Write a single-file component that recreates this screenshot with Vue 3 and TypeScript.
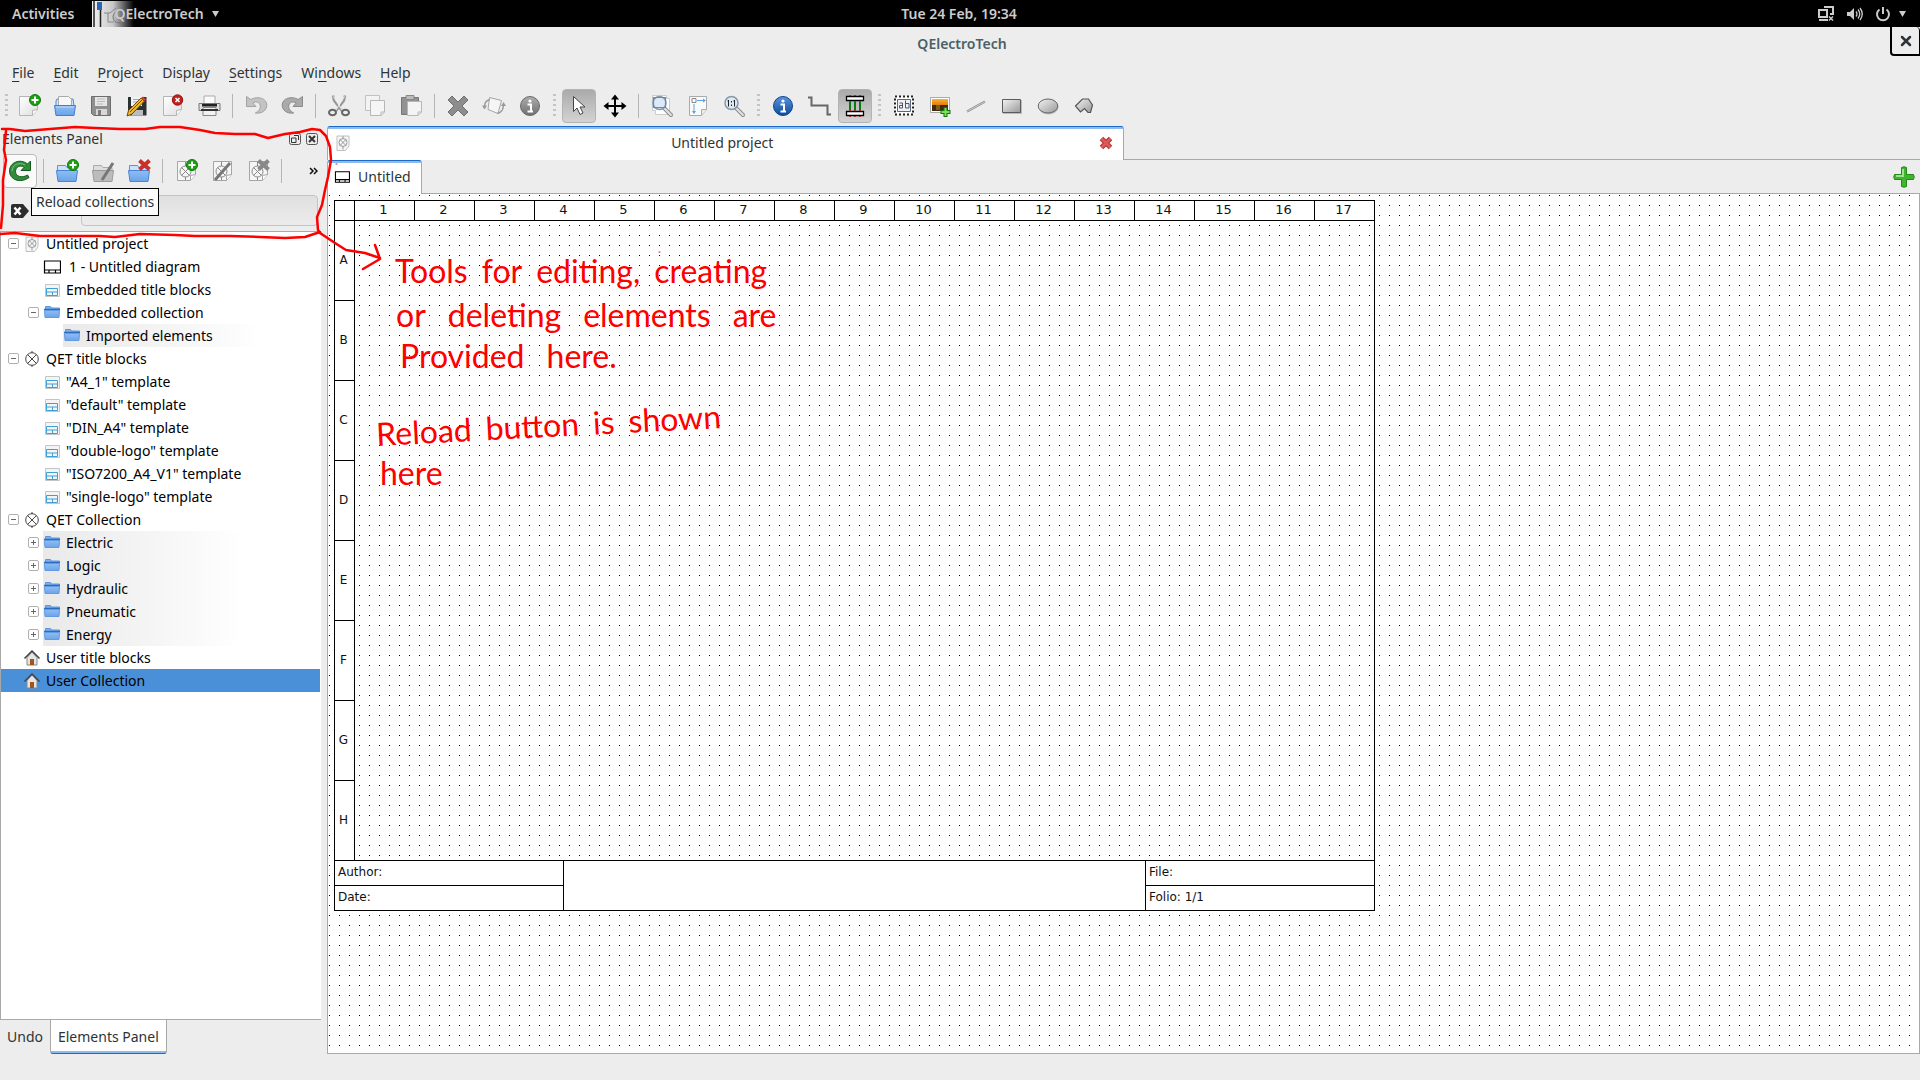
<script setup lang="ts">
import { ref } from 'vue'

interface ToolItem {
  kind: 'button' | 'sep' | 'grip'
  icon?: string
  label?: string
  active?: boolean
}

interface TreeRow {
  text: string
  icon: string
  level: number
  fold?: 'open' | 'closed'
  tinted?: boolean
}

const btn = (icon: string, label: string, active = false): ToolItem => ({ kind: 'button', icon, label, active })
const sep: ToolItem = { kind: 'sep' }
const grip: ToolItem = { kind: 'grip' }

const menus = [
  ['', 'F', 'ile'],
  ['', 'E', 'dit'],
  ['', 'P', 'roject'],
  ['Displ', 'a', 'y'],
  ['', 'S', 'ettings'],
  ['Wi', 'n', 'dows'],
  ['', 'H', 'elp'],
]

const tools: ToolItem[] = [
  grip, btn('new', 'New'), btn('open', 'Open'), btn('save', 'Save'), btn('saveas', 'Save as'), btn('close', 'Close'), btn('print', 'Print'),
  sep, btn('undo', 'Undo'), btn('redo', 'Redo'),
  sep, btn('cut', 'Cut'), btn('copy', 'Copy'), btn('paste', 'Paste'),
  sep, btn('delete', 'Delete'), btn('rotate', 'Rotate'), btn('infogray', 'Properties'),
  grip, btn('pointer', 'Selection mode', true), btn('move', 'View mode'),
  sep, btn('zoomfit', 'Zoom fit'), btn('zoompage', 'Zoom page'), btn('zoomone', 'Zoom reset'),
  grip, btn('info', 'Diagram properties'), btn('wire', 'Conductors'), btn('auto', 'Auto conductors', true),
  grip, btn('text', 'Add text'), btn('image', 'Add image'), btn('line', 'Add line'), btn('rect', 'Add rectangle'), btn('ellipse', 'Add ellipse'), btn('polygon', 'Add polygon'),
]

const panelTools: ToolItem[] = [
  btn('reload', 'Reload collections', true),
  sep, btn('foldernew', 'New category'), btn('folderedit', 'Edit category'), btn('folderdel', 'Delete category'),
  sep, btn('elnew', 'New element'), btn('eledit', 'Edit element'), btn('eldel', 'Delete element'),
  sep,
]

const rows: TreeRow[] = [
  { text: 'Untitled project', icon: 'project', level: 0, fold: 'open' },
  { text: '1 - Untitled diagram', icon: 'diagram', level: 1 },
  { text: 'Embedded title blocks', icon: 'titleblock', level: 1 },
  { text: 'Embedded collection', icon: 'folder', level: 1, fold: 'open' },
  { text: 'Imported elements', icon: 'folder', level: 2, tinted: true },
  { text: 'QET title blocks', icon: 'qet', level: 0, fold: 'open' },
  { text: '"A4_1" template', icon: 'titleblock', level: 1 },
  { text: '"default" template', icon: 'titleblock', level: 1 },
  { text: '"DIN_A4" template', icon: 'titleblock', level: 1 },
  { text: '"double-logo" template', icon: 'titleblock', level: 1 },
  { text: '"ISO7200_A4_V1" template', icon: 'titleblock', level: 1 },
  { text: '"single-logo" template', icon: 'titleblock', level: 1 },
  { text: 'QET Collection', icon: 'qet', level: 0, fold: 'open' },
  { text: 'Electric', icon: 'folder', level: 1, fold: 'closed', tinted: true },
  { text: 'Logic', icon: 'folder', level: 1, fold: 'closed', tinted: true },
  { text: 'Hydraulic', icon: 'folder', level: 1, fold: 'closed', tinted: true },
  { text: 'Pneumatic', icon: 'folder', level: 1, fold: 'closed', tinted: true },
  { text: 'Energy', icon: 'folder', level: 1, fold: 'closed', tinted: true },
  { text: 'User title blocks', icon: 'home', level: 0 },
  { text: 'User Collection', icon: 'home', level: 0 },
]

const selected = ref(19)
const filter = ref('')
const letters = ['A', 'B', 'C', 'D', 'E', 'F', 'G', 'H']

const notes = [
  { id: 'n1', words: ['Tools', 'for', 'editing,', 'creating'] },
  { id: 'n2', words: ['or', 'deleting', 'elements', 'are'] },
  { id: 'n3', words: ['Provided', 'here.'] },
  { id: 'n4', words: ['Reload', 'button', 'is', 'shown'] },
  { id: 'n5', words: ['here'] },
]
</script>

<template>
  <div class="desktop">
    <svg class="defs" aria-hidden="true">
      <defs>
        <linearGradient id="gBlue" x1="0" y1="0" x2="0" y2="1"><stop offset="0" stop-color="#8fbdf2" /><stop offset="1" stop-color="#6ba4ea" /></linearGradient>
        <linearGradient id="gPaper" x1="0" y1="0" x2="1" y2="1"><stop offset="0" stop-color="#fff" /><stop offset="1" stop-color="#dedede" /></linearGradient>
        <linearGradient id="gGray" x1="0" y1="0" x2="1" y2="1"><stop offset="0" stop-color="#f4f4f4" /><stop offset="1" stop-color="#989898" /></linearGradient>
        <linearGradient id="gInfo" x1="0" y1="0" x2="0" y2="1"><stop offset="0" stop-color="#5c93dc" /><stop offset="1" stop-color="#0b4b9c" /></linearGradient>
        <linearGradient id="gInfoGray" x1="0" y1="0" x2="0" y2="1"><stop offset="0" stop-color="#adadad" /><stop offset="1" stop-color="#6f6f6f" /></linearGradient>
        <linearGradient id="gSun" x1="0" y1="0" x2="0" y2="1"><stop offset="0" stop-color="#f9b52c" /><stop offset="1" stop-color="#e37a10" /></linearGradient>
        <linearGradient id="gAppFade"><stop offset="0" stop-color="#f2f2f2" /><stop offset="0.5" stop-color="#c8c8c8" /><stop offset="1" stop-color="#000" /></linearGradient>
      </defs>
      <symbol id="plusbadge" viewBox="0 0 12 12"><circle cx="6" cy="6" r="5.500" fill="#1da114" stroke="#0d7a0b" /><path d="M6 2.500v7M2.500 6h7" stroke="#fff" stroke-width="2" /></symbol>
      <symbol id="sheet" viewBox="0 0 24 24"><path d="M2.500 2.500h18v13l-5 6h-13z" fill="url(#gPaper)" stroke="#b5b5b5" /><path d="M15.500 21.500v-5l5-1" fill="#fff" stroke="#b5b5b5" /></symbol>
      <symbol id="new" viewBox="0 0 24 24"><use href="#sheet" width="24" height="24" /><use href="#plusbadge" x="12" y="0" width="12" height="12" /></symbol>
      <symbol id="close" viewBox="0 0 24 24"><use href="#sheet" width="24" height="24" /><circle cx="16.500" cy="6" r="5.200" fill="#c3201b" stroke="#971410" /><path d="M14.500 4l4 4m0-4l-4 4" stroke="#fff" stroke-width="1.600" /></symbol>
      <symbol id="open" viewBox="0 0 24 24"><path d="M3 7l1-2h16l1 7H3z" fill="#d6e6fa" stroke="#4c86d4" /><path d="M5.500 12V2.500h10l3 3V12z" fill="#f7f7f7" stroke="#aaa" /><path d="M1.500 11.500h21L21 21.500H3z" fill="url(#gBlue)" stroke="#3f7fd3" /><path d="M3 13h18" stroke="#bcd8f8" /></symbol>
      <symbol id="save" viewBox="0 0 24 24"><path d="M2.500 2.500h19v19H5l-2.500-2z" fill="#8f8f8f" stroke="#6d6d6d" /><path d="M6 3h12v9H6z" fill="#e6e6e6" /><path d="M8 5h8M8 7.500h8M8 10h6" stroke="#bdbdbd" /><path d="M7 15h11v6H7z" fill="#d7d7d7" /><path d="M9 16h3v5H9z" fill="#7b7b7b" /></symbol>
      <symbol id="saveas" viewBox="0 0 24 24"><path d="M3 3h18.500v18.500H5L3 20z" fill="#2c3033" /><path d="M6 3h11v9H6z" fill="#eef3fa" /><path d="M8 5.500h7M8 8h7" stroke="#9ab" /><path d="M7 16h11v5.500H7z" fill="#b9bcc0" /><path d="M2 22l1.500-5.500L16 4l3.500 3L7 20z" fill="#f2b72e" stroke="#6c4b0b" /><path d="M5 18L17 6" stroke="#6c4b0b" /><path d="M16 4l2-1.500 3 3L19.500 7z" fill="#d33c2c" /></symbol>
      <symbol id="print" viewBox="0 0 24 24"><path d="M7 10V2h11v8" fill="#fafafa" stroke="#aaa" /><path d="M2 9.500h21v7H2z" fill="#dedede" stroke="#777" /><path d="M5 10h15v2.500H5z" fill="#222" /><path d="M6 13.500h13v8H6z" fill="#f2f2f2" stroke="#888" /><path d="M4 16h17" stroke="#333" stroke-width="2" /></symbol>
      <symbol id="undo" viewBox="0 0 24 24"><path d="M2.500 2.500v10h9.500l-3.200-3.500c3-2 7.500-1 7.500 3.500 0 3-2 5-5 6.500 7 1 11.500-3 11.500-8 0-6.500-9-9.500-16-5.500z" fill="#c3c3c3" stroke="#a3a3a3" /></symbol>
      <symbol id="redo" viewBox="0 0 24 24"><path d="M22.500 2.500v10H13l3.200-3.500c-3-2-7.500-1-7.500 3.500 0 3 2 5 5 6.500-7 1-11.500-3-11.500-8 0-6.500 9-9.500 16-5.500z" fill="#aaa" stroke="#8c8c8c" /></symbol>
      <symbol id="cut" viewBox="0 0 24 24"><path d="M6 1.500l1 5L15 17M18 1.500l-1 5L9 17" fill="none" stroke="#999" stroke-width="2.400" /><path d="M6.500 2.500L15 16M17.500 2.500L9 16" stroke="#efefef" /><ellipse cx="5.500" cy="18.500" rx="3.500" ry="2.800" fill="none" stroke="#666" stroke-width="2" /><ellipse cx="18.500" cy="18.500" rx="3.500" ry="2.800" fill="none" stroke="#666" stroke-width="2" /></symbol>
      <symbol id="copy" viewBox="0 0 24 24"><path d="M2.500 1.500h14v15h-14z" fill="#f3f3f3" stroke="#c1c1c1" /><path d="M7.500 6.500h14V18l-3.500 3.500H7.500z" fill="#f5f5f5" stroke="#b7b7b7" /><path d="M18 21.500V18h3.500" fill="none" stroke="#b7b7b7" /></symbol>
      <symbol id="paste" viewBox="0 0 24 24"><path d="M2.500 3.500h17v17h-17z" fill="#929292" stroke="#777" /><path d="M7 1.500h8v4H7z" fill="#bbb" stroke="#888" /><path d="M8.500 7.500h14V18L19 21.500H8.500z" fill="#f4f4f4" stroke="#b7b7b7" /><path d="M19 21.500V18h3.500" fill="none" stroke="#b7b7b7" /></symbol>
      <symbol id="delete" viewBox="0 0 24 24"><path d="M6 2l6 6 6-6 4 4-6 6 6 6-4 4-6-6-6 6-4-4 6-6-6-6z" fill="#8d8d8d" stroke="#6f6f6f" /></symbol>
      <symbol id="rotate" viewBox="0 0 24 24"><path d="M7.500 3.500l12 3-3.500 13-10-4z" fill="#f5f5f5" stroke="#a5a5a5" /><path d="M2.500 14c0-5 1-7 5-8.500M21.500 10c0 5-1 8-6 9.500" fill="none" stroke="#999" stroke-width="1.500" /><path d="M0 11.500h5L2.500 15.500zM19 12h5l-2.500-4z" fill="#999" /></symbol>
      <symbol id="infogray" viewBox="0 0 24 24"><circle cx="12" cy="12" r="9.500" fill="url(#gInfoGray)" stroke="#6a6a6a" /><circle cx="12" cy="7" r="1.600" fill="#fff" /><path d="M9.500 10.500h3.500v6.500M9.500 17.500h5.500" stroke="#fff" stroke-width="2" fill="none" /></symbol>
      <symbol id="info" viewBox="0 0 24 24"><circle cx="12" cy="12" r="9.500" fill="url(#gInfo)" stroke="#0c458f" /><circle cx="12" cy="7" r="1.600" fill="#fff" /><path d="M9.500 10.500h3.500v6.500M9.500 17.500h5.500" stroke="#fff" stroke-width="2" fill="none" /></symbol>
      <symbol id="pointer" viewBox="0 0 24 24"><path d="M6.500 2.500v15l3.500-3.500 3 6.500 3-1.500-3-6h5z" fill="#fff" stroke="#444" /></symbol>
      <symbol id="move" viewBox="0 0 24 24"><path d="M12 3v18M3 12h18" stroke="#000" stroke-width="2" /><path d="M12 0.500l4 5H8zM12 23.500l4-5H8zM0.500 12l5-4v8zM23.500 12l-5-4v8z" /></symbol>
      <symbol id="glass" viewBox="0 0 24 24"><path d="M14 14l7 7" stroke="#8d8d8d" stroke-width="4" stroke-linecap="round" /><path d="M14 14l7 7" stroke="#e2e2e2" stroke-width="2" stroke-linecap="round" /><circle cx="9.500" cy="9" r="6.500" fill="#dce9f6" stroke="#8a98a8" stroke-width="1.500" /></symbol>
      <symbol id="zoomfit" viewBox="0 0 24 24"><path d="M2.500 1.500h14v3h3v16h-14v-4h-3z" fill="#fff" stroke="#ccc" /><use href="#glass" width="24" height="24" /><path d="M3.500 3.500h12v10h-12z" fill="none" stroke="#4a90dc" stroke-width="1.200" /></symbol>
      <symbol id="zoompage" viewBox="0 0 24 24"><path d="M3.500 2.500h17v13l-5 6h-12z" fill="#fafafa" stroke="#aaa" /><path d="M15.500 21.500v-6h5" fill="#ececec" stroke="#aaa" /><path d="M6 4.500h4v4H6z" fill="none" stroke="#888" /><path d="M11 6.500h8M8 10v9" stroke="#58a3ea" /><path d="M17 4.500l3 2-3 2zM6 17l2 3 2-3z" fill="#58a3ea" /></symbol>
      <symbol id="zoomone" viewBox="0 0 24 24"><use href="#glass" width="24" height="24" /><path d="M6.500 6v6.500M12.500 6v6.500M5.500 7h1M11.500 7h1M9.500 7v1.500M9.500 10.500V12" stroke="#222" /></symbol>
      <symbol id="wire" viewBox="0 0 24 24"><path d="M1 3.500h3.500v8h16V20.500H24" fill="none" stroke="#666" stroke-width="2" /></symbol>
      <symbol id="auto" viewBox="0 0 24 24"><path d="M7 1v22M12 1v22M17 1v22" stroke="#e11" stroke-width="1.500" /><path d="M7 8v8M12 8v8M17 8v8" stroke="#0a7a19" stroke-width="2" /><path d="M3.500 2.500h17v4h-17zM3.500 17.500h17v4h-17z" fill="#fff" stroke="#000" stroke-width="1.300" /></symbol>
      <symbol id="text" viewBox="0 0 24 24"><path d="M3 2.500h18v18H3z" fill="#fff" stroke="#222" stroke-width="2" stroke-dasharray="2 2" /><path d="M5.500 5.500h13v12h-13z" fill="#eef1f6" stroke="#58677e" /><path d="M7.500 9h3v5h-3v-2.500h3M13.500 6.500V14h3.500V9.500h-3.500" fill="none" stroke="#555" /></symbol>
      <symbol id="image" viewBox="0 0 24 24"><path d="M2.500 3.500h19v15h-19z" fill="#fff" stroke="#aaa" /><path d="M4 5h16v6H4z" fill="url(#gSun)" /><path d="M4 11h16v6H4z" fill="#3b2c12" /><path d="M8 11h4v5H8z" fill="#7e5a1b" /><path d="M17.500 13v10M12.500 18h10" stroke="#17730b" stroke-width="4" /><path d="M17.500 14v8M13.500 18h8" stroke="#7be05f" stroke-width="2" /></symbol>
      <symbol id="line" viewBox="0 0 24 24"><path d="M3 17.500L21 7.500" stroke="#8c8c8c" stroke-width="2.200" /><path d="M3 17.500L21 7.500" stroke="#ddd" stroke-width="0.800" /></symbol>
      <symbol id="rect" viewBox="0 0 24 24"><path d="M3 6h19v14H3z" fill="#bbb" /><path d="M2.500 5.500h18v13h-18z" fill="url(#gGray)" stroke="#5b5b5b" /></symbol>
      <symbol id="ellipse" viewBox="0 0 24 24"><ellipse cx="12.500" cy="13" rx="10" ry="7.500" fill="#bbb" /><ellipse cx="12" cy="12" rx="9.800" ry="7" fill="url(#gGray)" stroke="#666" /></symbol>
      <symbol id="polygon" viewBox="0 0 24 24"><path d="M3.500 12l7-7h6l4 6-2 7.500h-2.500l-3.500-4-4 3.500z" fill="url(#gGray)" stroke="#555" stroke-width="1.200" /></symbol>
      <symbol id="reload" viewBox="0 0 24 24"><path d="M22.500 2v9.500H13l3.200-3.200C12.500 5.500 7.500 8 7.500 12.500c0 5 6.500 7 12 3.500l1.500 2.500C12 25 1.500 20.500 1.500 12 1.500 3.500 12-1 19.500 5z" fill="#2f8c3a" stroke="#125c1c" /><path d="M4 12c0-6 7-9.500 13-6" fill="none" stroke="#7cc683" /></symbol>
      <symbol id="bigfolder" viewBox="0 0 24 24"><path d="M2.500 12V6.500h8l1.500 2h9V12z" fill="#cfe1f8" stroke="#5c94dc" /><path d="M1.500 11.500h21l-1.500 11H3z" fill="url(#gBlue)" stroke="#4684d8" /></symbol>
      <symbol id="foldernew" viewBox="0 0 24 24"><use href="#bigfolder" width="24" height="24" /><use href="#plusbadge" x="12" y="0" width="12" height="12" /></symbol>
      <symbol id="folderedit" viewBox="0 0 24 24"><path d="M2.500 12V6.500h8l1.500 2h9V12z" fill="#ddd" stroke="#aaa" /><path d="M1.500 11.500h21l-1.500 11H3z" fill="#bcbcbc" stroke="#9b9b9b" /><path d="M11 21L22 4" stroke="#777" stroke-width="3" /></symbol>
      <symbol id="folderdel" viewBox="0 0 24 24"><use href="#bigfolder" width="24" height="24" /><path d="M12.500 1.500l10 9m0-9l-10 9" stroke="#c8302b" stroke-width="4" /></symbol>
      <symbol id="element" viewBox="0 0 24 24"><path d="M3.500 2.500h18v13l-5 6h-13z" fill="#f6f6f6" stroke="#a5a5a5" /><path d="M16.500 21.500v-5l5-1" fill="#fff" stroke="#a5a5a5" /><circle cx="11.500" cy="12.500" r="5.500" fill="none" stroke="#888" /><path d="M7.500 8.500l8 8m0-8l-8 8M11.500 3v4M11.500 18v3" stroke="#888" fill="none" /></symbol>
      <symbol id="elnew" viewBox="0 0 24 24"><use href="#element" width="24" height="24" /><use href="#plusbadge" x="12" y="0" width="12" height="12" /></symbol>
      <symbol id="eledit" viewBox="0 0 24 24"><use href="#element" width="24" height="24" /><path d="M5 21L20 4" stroke="#777" stroke-width="3" /></symbol>
      <symbol id="eldel" viewBox="0 0 24 24"><use href="#element" width="24" height="24" /><path d="M12.500 1.500l10 9m0-9l-10 9" stroke="#888" stroke-width="4" /></symbol>
      <symbol id="folder" viewBox="0 0 18 16"><path d="M2.500 5V1.500h5l1 1.500h8v2z" fill="#7eb0ec" stroke="#5e96dd" /><path d="M1 4.500h16" stroke="#2d6cc0" stroke-width="1.500" /><path d="M1.500 5.500h15l-.5 7H2z" fill="url(#gBlue)" stroke="#609ae2" /></symbol>
      <symbol id="titleblock" viewBox="0 0 18 16"><path d="M2.500 2.500h14v12h-14z" fill="#f4f4f4" stroke="#c4c4c4" /><path d="M3.500 6.500h11v7h-11zM3.500 10h11M9.500 10v3.500" fill="none" stroke="#3fa0d8" /></symbol>
      <symbol id="diagram" viewBox="0 0 18 16"><path d="M1.500 2h16v12h-16zM1.500 11h16M6 11v3M12.500 11v3" fill="#fff" stroke="#000" stroke-width="1.200" /></symbol>
      <symbol id="qet" viewBox="0 0 18 16"><circle cx="9" cy="8" r="6.300" fill="#fff" stroke="#444" /><path d="M4.500 3.500l9 9m0-9l-9 9M9 0v2M9 14v2" stroke="#444" fill="none" /></symbol>
      <symbol id="project" viewBox="0 0 18 16"><path d="M3 1h12v10l-3.500 4.500H3z" fill="#f6f6f6" stroke="#c0c0c0" /><circle cx="9" cy="7.500" r="4" fill="none" stroke="#999" /><path d="M6 4.500l6 6m0-6l-6 6M9 1v2.500M9 11.500v3" stroke="#999" /></symbol>
      <symbol id="home" viewBox="0 0 18 16"><path d="M4 7.500L9 2l5 5.500v7.500H4z" fill="#e3e5e6" stroke="#888" /><path d="M1.500 8.500L9 1l7.500 7.500" fill="none" stroke="#444" stroke-width="1.500" /><path d="M7 9h4v6H7z" fill="#a4541b" /></symbol>
    </svg>

    <header class="topbar">
      <div class="topleft">
        <button type="button" class="topbtn">Activities</button>
        <button type="button" class="topbtn app">
          <svg class="appicon" width="42" height="26" viewBox="0 0 42 26"><path d="M0 0h42v26H0z" fill="url(#gAppFade)" /><path d="M2 0v26M8.500 8v18" stroke="#222" stroke-width="1.500" /><path d="M5 1h5v8H5z" fill="#2d63b4" /><path d="M12 12h6l6-5M16 12v9h6" stroke="#888" fill="none" /><circle cx="27" cy="16" r="6" fill="none" stroke="#777" /></svg>
          <span class="appname">QElectroTech</span>
          <svg width="7" height="6" viewBox="0 0 7 6"><path d="M0 0h7L3.500 6z" fill="#ccc" /></svg>
        </button>
      </div>
      <time class="clock">Tue 24 Feb, 19:34</time>
      <div class="tray">
        <svg width="18" height="16" viewBox="0 0 18 16"><path d="M2 4h8v7H2zM2 14h9M7 1h9v7h-3" fill="none" stroke="#ccc" stroke-width="2" /><path d="M12 10.500l4 4m0-4l-4 4" stroke="#ccc" stroke-width="1.500" /></svg>
        <svg width="16" height="14" viewBox="0 0 16 14"><path d="M0 5h3l4-4v12L3 9H0z" fill="#ccc" /><path d="M9 4.500q2 2.500 0 5M11 2.500q3.500 4.500 0 9M13 1q4.500 6 0 12" fill="none" stroke="#ccc" stroke-width="1.300" /></svg>
        <svg width="16" height="16" viewBox="0 0 16 16"><path d="M8 1v7M4.500 3.500a6 6 0 1 0 7 0" fill="none" stroke="#ccc" stroke-width="2" /></svg>
        <svg class="caret" width="7" height="6" viewBox="0 0 7 6"><path d="M0 0h7L3.500 6z" fill="#ccc" /></svg>
      </div>
    </header>

    <div class="titlebar">
      <span>QElectroTech</span>
      <button type="button" class="winclose" aria-label="Close window">
        <svg width="12" height="12" viewBox="0 0 12 12"><path d="M2 2l8 8m0-8l-8 8" stroke="#2e3436" stroke-width="2.500" stroke-linecap="round" /></svg>
      </button>
    </div>

    <nav class="menubar">
      <button v-for="m in menus" :key="m.join('')" type="button">{{ m[0] }}<u>{{ m[1] }}</u>{{ m[2] }}</button>
    </nav>

    <div class="toolbar">
      <template v-for="(t, i) in tools" :key="i">
        <button v-if="t.kind === 'button'" type="button" class="tool" :class="{ active: t.active }" :aria-label="t.label">
          <svg width="24" height="24"><use :href="'#' + t.icon" /></svg>
        </button>
        <i v-else :class="t.kind"></i>
      </template>
    </div>

    <main class="main">
      <aside class="dock">
        <div class="docktitle">
          <span>Elements Panel</span>
          <button type="button" aria-label="Float"><svg width="12" height="12" viewBox="0 0 12 12"><rect x=".5" y=".5" width="11" height="11" rx="2" fill="none" stroke="#555" /><path d="M5 2.500h4.500V7M2.500 5h4.500v4.500H2.500z" fill="none" stroke="#333" /></svg></button>
          <button type="button" aria-label="Close panel"><svg width="12" height="12" viewBox="0 0 12 12"><rect x=".5" y=".5" width="11" height="11" rx="2" fill="none" stroke="#555" /><path d="M3 3l6 6m0-6l-6 6" stroke="#333" stroke-width="2" /></svg></button>
        </div>
        <div class="paneltools">
          <template v-for="(t, i) in panelTools" :key="i">
            <button v-if="t.kind === 'button'" type="button" class="tool" :class="{ hover: t.active }" :aria-label="t.label">
              <svg width="24" height="24"><use :href="'#' + t.icon" /></svg>
            </button>
            <i v-else :class="t.kind"></i>
          </template>
          <button type="button" class="more" aria-label="More tools"><svg width="9" height="8" viewBox="0 0 9 8"><path d="M1 1l3 3-3 3M5 1l3 3-3 3" fill="none" stroke="#111" stroke-width="1.500" /></svg></button>
          <div class="tooltip" role="tooltip">Reload collections</div>
        </div>
        <div class="filter">
          <button type="button" aria-label="Clear filter" @click="filter = ''"><svg width="18" height="14" viewBox="0 0 18 14"><path d="M0 2q0-2 2-2h10l6 7-6 7H2q-2 0-2-2z" fill="#2d2d2d" /><path d="M3.500 3.500l6 7m0-7l-6 7" stroke="#fff" stroke-width="2.500" /></svg></button>
          <input v-model="filter" type="text" aria-label="Filter elements" />
        </div>
        <ul class="tree">
          <li v-for="(r, i) in rows" :key="i" :class="['lv' + r.level, { selected: selected === i }]" @click="selected = i">
            <span class="fold">
              <svg v-if="r.fold" width="11" height="11" viewBox="0 0 11 11"><rect x=".5" y=".5" width="10" height="10" rx="1.500" fill="#fff" stroke="#b0b0b0" /><path d="M3 5.500h5" stroke="#666" /><path v-if="r.fold === 'closed'" d="M5.500 3v5" stroke="#666" /></svg>
            </span>
            <span class="item" :class="{ tinted: r.tinted }">
              <svg width="18" height="16"><use :href="'#' + r.icon" /></svg>
              <span :class="{ folio: r.icon === 'diagram' }">{{ r.text }}</span>
            </span>
          </li>
        </ul>
        <div class="docktabs">
          <button type="button">Undo</button>
          <button type="button" class="current">Elements Panel</button>
        </div>
      </aside>

      <section class="work">
        <div class="ptabs">
          <div class="ptab">
            <svg width="18" height="16"><use href="#project" /></svg>
            <span>Untitled project</span>
            <button type="button" aria-label="Close project"><svg width="14" height="14" viewBox="0 0 14 14"><path d="M2.500 2.500l9 9m0-9l-9 9" stroke="#b92f2f" stroke-width="5" /><path d="M2.500 2.500l9 9m0-9l-9 9" stroke="#dd5858" stroke-width="3" /></svg></button>
          </div>
        </div>
        <div class="dtabs">
          <button type="button" class="dtab"><svg width="16" height="14"><use href="#diagram" /></svg>Untitled</button>
          <button type="button" class="add" aria-label="Add diagram"><svg width="22" height="22" viewBox="0 0 22 22"><path d="M8.500 1.500q2.500-1.500 5 0v7h7q1.500 2.500 0 5h-7v7q-2.500 1.500-5 0v-7h-7q-1.500-2.500 0-5h7z" fill="#3fb52e" stroke="#238a18" /><path d="M10 3v7H3" fill="none" stroke="#9be28d" stroke-width="2" /></svg></button>
        </div>
        <div class="canvas">
          <div class="folioframe">
            <div class="cols">
              <span class="corner"></span>
              <span v-for="n in 17" :key="n">{{ n }}</span>
            </div>
            <div class="letters">
              <span v-for="l in letters" :key="l">{{ l }}</span>
            </div>
            <div class="block">
              <div class="pair"><span>Author:</span><span>Date:</span></div>
              <div class="blank"></div>
              <div class="pair"><span>File:</span><span>Folio: 1/1</span></div>
            </div>
          </div>
        </div>
      </section>
    </main>
    <footer class="status"></footer>

    <svg class="ink" width="800" height="300" viewBox="0 0 800 300" aria-hidden="true">
      <path d="M2 129L10 129L25 131L50 129L75 127L95 128L120 129L145 129L160 127L180 127L200 130L215 133L235 134L255 134L268 138L285 134L300 132L312 129L320 130L326 136L330 147L331 160L328 177L325 190L322 205L317 217L318 230L320 233" />
      <path d="M6 131L4 150L6 160L3 180L3 205L1 228M0 234L15 233L40 236L70 236L100 236L115 237L140 234L175 235L195 236L230 236L260 237L285 238L305 237L320 232" />
      <path d="M320 233L335 243L346 250L365 253L380 258M375 245L380 259L363 269" />
      <path class="speck" d="M336 164h1M659 252h1" />
    </svg>
    <p v-for="n in notes" :key="n.id" class="note" :class="n.id"><span v-for="w in n.words" :key="w">{{ w }}</span></p>
  </div>
</template>

<style>
body {
  margin: 0;
}
</style>

<style scoped>
.desktop {
  position: relative;
  display: flex;
  flex-direction: column;
  min-height: 100vh;
  background: #ededed;
  color: #2e3436;
  font-family: "Noto Sans", "Open Sans", sans-serif;
  font-size: 14px;
  line-height: 20px;
  overflow: hidden;
}
.desktop * {
  box-sizing: border-box;
}
.defs {
  position: absolute;
  width: 0;
  height: 0;
}
svg {
  display: block;
  flex: none;
}
button {
  margin: 0;
  padding: 0;
  border: 0;
  background: none;
  color: inherit;
  font: inherit;
}
.topbar {
  display: grid;
  grid-template-columns: 1fr auto 1fr;
  align-items: center;
  height: 27px;
  padding: 0 14px 0 12px;
  background: #000;
  color: #ccc;
  font-size: 14px;
  font-weight: 600;
}
.topleft,
.app,
.tray {
  display: flex;
  align-items: center;
}
.topleft {
  gap: 18px;
}
.appicon {
  margin-right: -20px;
}
.appname {
  margin-right: 8px;
}
.tray {
  justify-content: flex-end;
  gap: 12px;
}
.caret {
  margin-left: -4px;
}
.titlebar {
  position: relative;
  display: flex;
  align-items: center;
  justify-content: center;
  height: 34px;
  padding-left: 4px;
  border-radius: 6px 6px 0 0;
  color: #4b6067;
  font-size: 14px;
  font-weight: 600;
}
.winclose {
  position: absolute;
  top: 0;
  right: 0;
  display: flex;
  align-items: center;
  justify-content: center;
  width: 30px;
  height: 29px;
  border: 2px solid #000;
  border-width: 0 1px 2px 2px;
  border-radius: 0 4px 0 4px;
}
.menubar {
  display: flex;
  align-items: center;
  gap: 19px;
  height: 24px;
  padding-left: 12px;
}
.menubar u {
  text-underline-offset: 3px;
}
.toolbar {
  display: flex;
  align-items: center;
  height: 41px;
}
.tool {
  display: flex;
  flex: none;
  align-items: center;
  justify-content: center;
  width: 34px;
  height: 34px;
  margin: 0 1px;
  border: 1px solid transparent;
  border-radius: 4px;
}
.tool.active {
  border-color: #b3b3b3;
  background: linear-gradient(#a9aaa9, #d3d3d3);
}
.tool.hover {
  border-color: #bbb;
  background: #fafafa;
}
.sep {
  flex: none;
  width: 1px;
  height: 24px;
  margin: 0 5px;
  background: #b5b5b5;
}
.grip {
  flex: none;
  width: 3px;
  height: 24px;
  margin: 0 5px;
  background: repeating-linear-gradient(#c4c4c4 0 2px, transparent 2px 5px);
}
.grip:first-child {
  margin: 0 3px 0 5px;
}
.main {
  display: flex;
  flex: 1;
}
.dock {
  display: flex;
  flex: none;
  flex-direction: column;
  width: 321px;
}
.docktitle {
  display: flex;
  align-items: center;
  gap: 5px;
  height: 26px;
  padding: 0 3px 0 2px;
}
.docktitle span {
  flex: 1;
}
.paneltools {
  position: relative;
  display: flex;
  align-items: center;
  height: 38px;
  padding: 0 3px 0 2px;
}
.more {
  margin-left: auto;
}
.tooltip {
  position: absolute;
  top: 36px;
  left: 31px;
  padding: 3px 4px;
  border: 1px solid #000;
  background: #fcfcfc;
  white-space: nowrap;
}
.filter {
  display: flex;
  align-items: center;
  justify-content: space-between;
  height: 41px;
  padding: 0 3px 0 11px;
}
.filter input {
  width: 237px;
  height: 31px;
  padding: 0 8px;
  border: 1px solid #c4c4c4;
  border-radius: 4px;
  background: linear-gradient(#e0e0e0, #ececec);
  font: inherit;
}
.tree {
  flex: 1;
  margin: 0;
  padding: 0 1px 0 0;
  border: 1px solid #a9a9a9;
  border-right: 0;
  background: #fff;
  color: #000;
  list-style: none;
}
.tree li {
  display: flex;
  align-items: center;
  height: 23px;
}
.fold {
  flex: none;
  width: 15px;
}
.lv0 {
  padding-left: 7px;
}
.lv1 {
  padding-left: 27px;
}
.lv2 {
  padding-left: 47px;
}
.item {
  display: flex;
  align-items: center;
  gap: 5px;
  height: 23px;
}
.tinted {
  width: 200px;
  background: linear-gradient(90deg, #e9e9e9, #fff);
}
.folio {
  padding-left: 3px;
}
.tree .selected {
  background: #4a90d9;
}
.docktabs {
  display: flex;
  height: 34px;
}
.docktabs button {
  padding: 0 7px;
}
.docktabs .current {
  border: 1px solid #a9a9a9;
  border-top: 0;
  border-bottom: 1px solid #1b6ac6;
  border-radius: 0 0 3px 3px;
  background: linear-gradient(#fff 0 31px, #8cbcf0 31px);
}
.work {
  display: flex;
  flex: 1;
  flex-direction: column;
  margin-left: 6px;
}
.ptabs,
.dtabs {
  display: flex;
  height: 34px;
  background: linear-gradient(#a9a9a9, #a9a9a9) bottom / 100% 1px no-repeat;
}
.ptab {
  display: flex;
  align-items: center;
  width: 50%;
  padding: 0 10px 2px 6px;
  border: 1px solid #a9a9a9;
  border-top-color: #1b6ac6;
  border-bottom: 0;
  border-radius: 3px 3px 0 0;
  background: linear-gradient(#8cbcf0 0 2px, #fff 2px);
}
.ptab span {
  flex: 1;
  padding-right: 6px;
  text-align: center;
}
.dtab {
  display: flex;
  align-items: center;
  gap: 8px;
  padding: 0 10px 2px 6px;
  border: 1px solid #a9a9a9;
  border-top-color: #1b6ac6;
  border-bottom: 0;
  border-radius: 3px 3px 0 0;
  background: linear-gradient(#8cbcf0 0 2px, #fff 2px);
}
.add {
  margin: 0 5px 0 auto;
}
.canvas {
  flex: 1;
  padding: 5px 6px;
  border: 1px solid #a9a9a9;
  border-top: 0;
  background:
    linear-gradient(90deg, transparent 1px, #fff 1px) 1px 1px / 10px 10px,
    linear-gradient(#000 1px, #fff 1px) 1px 1px / 10px 10px;
}
.folioframe {
  width: 1041px;
  margin-top: 1px;
  border: 1px solid #000;
  color: #111;
  font-family: "DejaVu Sans", sans-serif;
  font-size: 12px;
}
.cols {
  display: flex;
  height: 20px;
  border-bottom: 1px solid #000;
  background: #fff;
  font-size: 13px;
}
.cols span {
  width: 60px;
  padding-right: 2px;
  border-left: 1px solid #000;
  line-height: 18px;
  text-align: center;
}
.cols .corner {
  width: 19px;
  border: 0;
}
.letters {
  display: flex;
  flex-direction: column;
  width: 20px;
  border-right: 1px solid #000;
  background: #fff;
}
.letters span {
  height: 80px;
  padding-right: 2px;
  border-bottom: 1px solid #000;
  line-height: 79px;
  text-align: center;
}
.letters span:last-child {
  height: 79px;
  border-bottom: 0;
}
.block {
  display: flex;
  height: 50px;
  border-top: 1px solid #000;
  background: #fff;
}
.pair {
  width: 228px;
}
.pair span {
  display: block;
  height: 24px;
  padding-left: 3px;
  line-height: 22px;
}
.pair span + span {
  height: 25px;
  border-top: 1px solid #000;
}
.blank {
  flex: 1;
  border: 1px solid #000;
  border-width: 0 1px;
}
.status {
  height: 26px;
}
.ink {
  position: absolute;
  top: 0;
  left: 0;
  pointer-events: none;
}
.ink path {
  fill: none;
  stroke: #f00;
  stroke-width: 2.500;
  stroke-linecap: round;
  stroke-linejoin: round;
}
.ink .speck {
  stroke-width: 1;
}
.note {
  position: absolute;
  display: flex;
  gap: 14px;
  margin: 0;
  color: #f00;
  font-family: Lato, "Noto Sans", sans-serif;
  font-size: 32px;
  line-height: 40px;
  white-space: nowrap;
  pointer-events: none;
}
.n1 {
  top: 251px;
  left: 395px;
}
.n2 {
  top: 295px;
  left: 396px;
  gap: 22px;
}
.n3 {
  top: 336px;
  left: 400px;
  gap: 22px;
}
.n4 {
  top: 405px;
  left: 376px;
  transform: rotate(-3deg);
}
.n5 {
  top: 453px;
  left: 380px;
}
</style>
